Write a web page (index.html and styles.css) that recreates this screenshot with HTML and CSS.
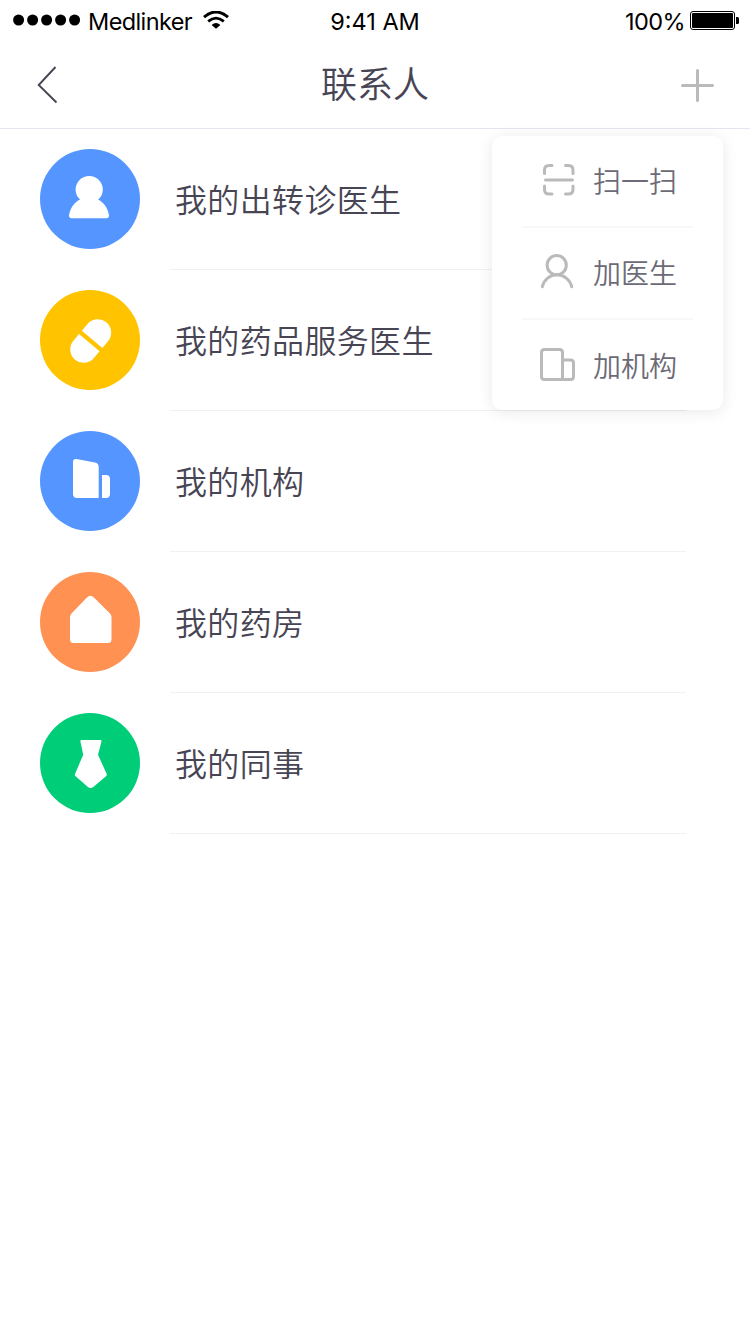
FILE: index.html
```html
<!DOCTYPE html>
<html lang="zh-CN">
<head>
<meta charset="utf-8">
<title>联系人</title>
<link rel="stylesheet" href="styles.css">
</head>
<body>
<div class="screen">
  <header class="status">
    <div class="status-left">
      <svg class="signal" width="68" height="12" viewBox="0 0 68 12"><circle cx="5.6" cy="6" r="5.5"/><circle cx="19.6" cy="6" r="5.5"/><circle cx="33.6" cy="6" r="5.5"/><circle cx="47.6" cy="6" r="5.5"/><circle cx="61.6" cy="6" r="5.5"/></svg>
      <span class="carrier">Medlinker</span>
      <svg class="wifi" width="26" height="18" viewBox="0 0 26 18"><path d="M1 6.2Q13-4.2 25 6.2" fill="none" stroke="#000" stroke-width="2.9"/><path d="M5.2 10.4Q13 3.8 20.8 10.4" fill="none" stroke="#000" stroke-width="2.8"/><path d="M8.600 14Q13 9.800 17.400 14L13 17.800Z"/></svg>
    </div>
    <span class="clock">9:41 AM</span>
    <div class="status-right">
      <span class="percent">100%</span>
      <svg class="battery" width="50" height="20" viewBox="0 0 50 20"><rect x=".5" y=".5" width="44" height="18" rx="2.5" fill="none" stroke="#000"/><rect x="2" y="2" width="41" height="15" rx="1"/><path d="M46 6h1.5q1.500 0 1.500 1.500v4q0 1.500-1.500 1.500H46z"/></svg>
    </div>
  </header>
  <nav class="navbar">
    <svg class="back" width="22" height="38" viewBox="0 0 22 38"><path d="M19.500 1 2.700 19 20.500 36.500" fill="none" stroke="#474554" stroke-width="1.900"/></svg>
    <h1 class="title">联系人</h1>
    <div class="add">
      <svg class="plus" width="34" height="34" viewBox="0 0 34 34"><path d="M2.500 17.500h30M17.500 2.500v30" fill="none" stroke="#bababa" stroke-width="3" stroke-linecap="round"/></svg>
      <div class="menu">
        <div class="menu-item">
          <svg class="menu-icon" width="36" height="36" viewBox="0 0 36 36"><path d="M4.500 10.500V7q0-4.500 4.500-4.500h3M25.500 2.500h3Q33 2.500 33 7v3.500M33 23v3.500q0 4.500-4.500 4.500h-3M12 31H9q-4.500 0-4.500-4.500V23M5.500 17h27"/></svg>
          <span>扫一扫</span>
        </div>
        <div class="menu-item">
          <svg class="menu-icon" width="36" height="36" viewBox="0 0 36 36"><circle cx="16.700" cy="10.200" r="9.600"/><path d="M2.300 31.700C4 24.500 10 19.800 17 19.800S30 24.500 31.700 31.700"/></svg>
          <span>加医生</span>
        </div>
        <div class="menu-item">
          <svg class="menu-icon" width="36" height="36" viewBox="0 0 36 36"><path d="M22.500 31.500H4.500q-3 0-3-3v-24q0-3 3-3h15q3 0 3 3zM22.500 12h8q3 0 3 3v13.500q0 3-3 3h-8"/></svg>
          <span>加机构</span>
        </div>
      </div>
    </div>
  </nav>
  <main class="list">
    <div class="row">
      <svg class="avatar blue" viewBox="0 0 100 100"><circle cx="49.200" cy="40.500" r="13.600"/><path d="M41 50C34.500 53 30 59 29 66.500Q29 69.300 31.500 69.300H66.500Q69 69.300 69 66.500C68 59 63.500 53 57 50Z"/></svg>
      <span class="label">我的出转诊医生</span>
    </div>
    <div class="row">
      <svg class="avatar yellow" viewBox="0 0 100 100"><g transform="translate(50.700 51) rotate(40)"><path d="M-13.400-2.200V-11a13.400 13.400 0 0 1 26.800 0v8.800z"/><path d="M-13.400 2.200V11a13.400 13.400 0 0 0 26.800 0V2.200z"/></g></svg>
      <span class="label">我的药品服务医生</span>
    </div>
    <div class="row">
      <svg class="avatar blue" viewBox="0 0 100 100"><path d="M33 31q0-3.400 3.400-3L55 31.400q3.700.8 3.700 4.500V67H37q-4 0-4-4zM62 44h4q4 0 4 4v15q0 4-4 4h-4z"/></svg>
      <span class="label">我的机构</span>
    </div>
    <div class="row">
      <svg class="avatar orange" viewBox="0 0 100 100"><path d="M46.900 25.400Q50.400 22 53.900 25.400L70 41.500Q71.500 43 71.500 45.300V67.500Q71.500 71 68 71H33.500Q30 71 30 67.500V45.300Q30 43 31.500 41.500Z"/></svg>
      <span class="label">我的药房</span>
    </div>
    <div class="row">
      <svg class="avatar green" viewBox="0 0 100 100"><path d="M41.500 27H60.500Q61.800 27 61.500 28.500L58 41.700 66.700 61Q67.200 62.300 66 63.300L53 74.200Q50.600 75.800 48.200 74.200L35.600 63.300Q34.400 62.300 35 61L43.200 41.700 40.400 28.500Q40.200 27 41.500 27Z"/></svg>
      <span class="label">我的同事</span>
    </div>
  </main>
</div>
</body>
</html>
```
FILE: styles.css
```css
* { box-sizing: border-box; }
body {
  margin: 0;
  background: #fff;
  font-family: "Noto Sans CJK SC", sans-serif;
  font-weight: 350;
  color: #474554;
}
svg { display: block; flex: none; }
.screen { width: 750px; height: 1334px; }
.status {
  display: grid;
  grid-template-columns: 1fr auto 1fr;
  grid-template-rows: 40px;
  height: 40px;
  padding: 0 10px 0 13px;
  align-items: center;
  font: 370 23.5px/30px Inter, sans-serif;
  letter-spacing: -.6px;
  color: #000;
}
.status span { padding-top: 3px; }
.status-left, .status-right { display: flex; align-items: center; height: 40px; }
.status-right { justify-content: flex-end; gap: 5px; }
.battery { margin-top: 1px; }
.carrier { margin: 0 11px 0 7px; }
.wifi { margin-bottom: 1px; }
.clock { margin-right: 3px; }
.status .clock { letter-spacing: 0; }
.navbar {
  display: grid;
  grid-template-columns: 1fr auto 1fr;
  align-items: center;
  height: 89px;
  padding: 2px 36px 0;
  border-bottom: 1px solid #e3e6f1;
}
.title {
  margin: 0;
  padding-bottom: 6px;
  font-size: 36px;
  line-height: 52px;
  font-weight: inherit;
}
.add { position: relative; justify-self: end; }
.menu {
  position: absolute;
  top: 68px;
  right: -9px;
  width: 231px;
  height: 274px;
  padding: 0 30px;
  border-radius: 10px;
  background: #fff;
  box-shadow: 0 2px 16px rgba(0, 0, 0, .09);
}
.menu-item {
  display: flex;
  align-items: center;
  gap: 17px;
  height: 92px;
  padding-left: 18px;
  border-bottom: 2px solid #f8f8f8;
  font-size: 28px;
  line-height: 40px;
  color: #6c6a76;
}
.menu-item:last-child { border-bottom: 0; }
.menu-item span { padding-bottom: 3px; }
.menu-icon {
  overflow: visible;
  fill: none;
  stroke: #bababa;
  stroke-width: 3;
  stroke-linecap: round;
}
.row {
  display: flex;
  align-items: center;
  height: 141px;
  padding: 0 0 1px 40px;
  background: linear-gradient(#f0f0f0, #f0f0f0) 170px 100% / 516px 1px no-repeat;
}
.avatar { width: 100px; height: 100px; border-radius: 50%; fill: #fff; }
.blue { background: #5595ff; }
.yellow { background: #ffc300; }
.orange { background: #ff9153; }
.green { background: #00cd78; }
.label {
  margin-left: 35px;
  padding-bottom: 3px;
  font-size: 32px;
  line-height: 46px;
  letter-spacing: .35px;
}
```
